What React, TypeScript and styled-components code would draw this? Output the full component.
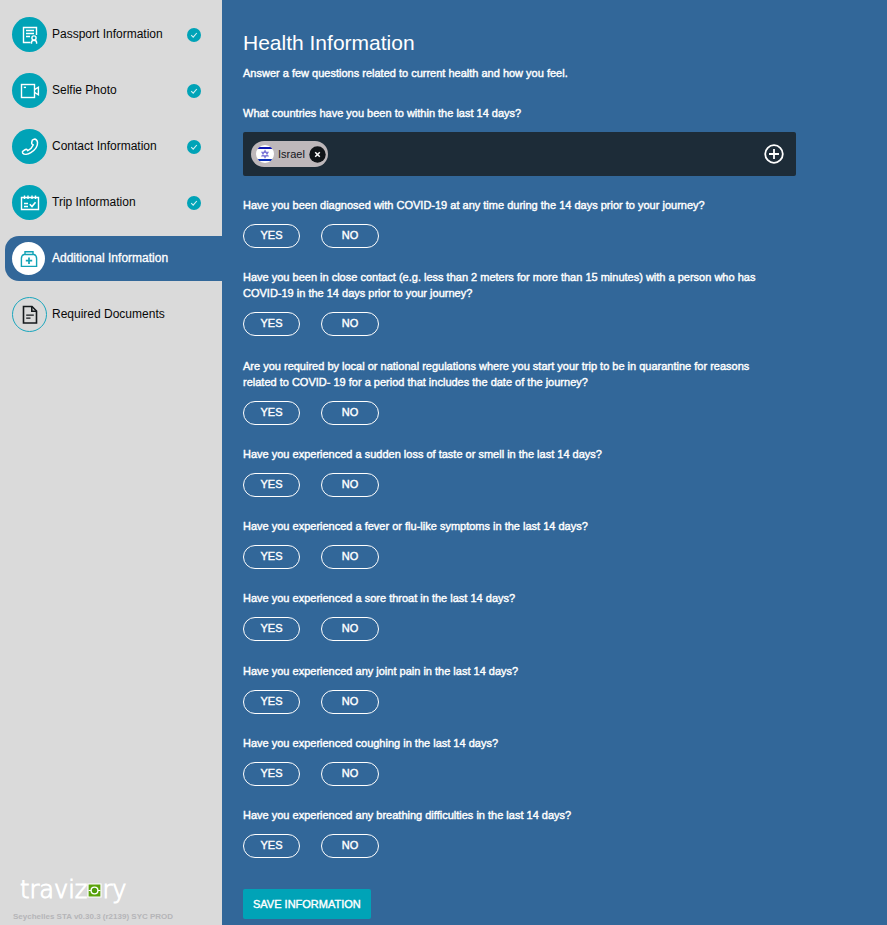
import React, { useState } from 'react';
import styled, { createGlobalStyle } from 'styled-components';

const GlobalStyle = createGlobalStyle`
  *, *::before, *::after { box-sizing: border-box; }
  body {
    margin: 0;
    background: #326799;
    font-family: "Liberation Sans", Arial, sans-serif;
  }
  button { font-family: inherit; cursor: pointer; }
`;

const Page = styled.div`
  display: flex;
  min-height: 100vh;
`;

const Sidebar = styled.aside`
  flex: 0 0 222px;
  display: flex;
  flex-direction: column;
  justify-content: space-between;
  padding: 12px 0 0 5px;
  background: #dadada;
`;

const Steps = styled.nav`
  display: flex;
  flex-direction: column;
  gap: 11px;
`;

const Step = styled.a<{ $active?: boolean }>`
  display: flex;
  align-items: center;
  height: 45px;
  padding: 0 21px 0 7px;
  border-radius: 14px 0 0 14px;
  color: ${(p) => (p.$active ? '#ffffff' : '#080808')};
  background: ${(p) => (p.$active ? '#326799' : 'transparent')};
  -webkit-text-stroke: ${(p) => (p.$active ? '0.3px' : '0')};
  font-size: 12px;
  line-height: 16px;
  text-decoration: none;
`;

type Tone = 'done' | 'active' | 'todo';

const StepIcon = styled.span<{ $tone: Tone }>`
  display: flex;
  align-items: center;
  justify-content: center;
  flex: none;
  width: ${(p) => (p.$tone === 'active' ? 33 : 35)}px;
  height: ${(p) => (p.$tone === 'active' ? 33 : 35)}px;
  margin-right: ${(p) => (p.$tone === 'active' ? 7 : 5)}px;
  border-radius: 50%;
  border: ${(p) => (p.$tone === 'todo' ? '1px solid #1aa6bd' : 'none')};
  background: ${(p) =>
    p.$tone === 'done' ? '#00a3b7' : p.$tone === 'active' ? '#ffffff' : 'transparent'};
  color: ${(p) =>
    p.$tone === 'done' ? '#ffffff' : p.$tone === 'active' ? '#12a3b6' : '#15191c'};
`;

const StepLabel = styled.span`
  flex: 1;
  padding-bottom: 2px;
`;

const Brand = styled.footer`
  padding: 0 8px;
`;

const Logo = styled.div`
  display: flex;
  align-items: center;
  height: 30px;
  padding-left: 7px;
  color: #ffffff;
  font-family: "DejaVu Sans", sans-serif;
  font-weight: 200;
  font-size: 24px;
  line-height: 30px;
  -webkit-text-stroke: 1px #ffffff;
`;

const Version = styled.p`
  margin: 4px 0 0;
  color: #b5b5b8;
  font-size: 8px;
  font-weight: 700;
  line-height: 16px;
`;

const Main = styled.main`
  flex: 1;
  display: flex;
  flex-direction: column;
  align-items: flex-start;
  min-width: 0;
  padding: 30px 91px 6px 21px;
  background: #326799;
  color: #ffffff;
`;

const Title = styled.h1`
  margin: 0;
  font-size: 21px;
  font-weight: 400;
  line-height: 26px;
`;

const Question = styled.p`
  margin: 0;
  padding-right: 20px;
  font-size: 11px;
  line-height: 16px;
  -webkit-text-stroke: 0.4px #ffffff;
`;

const Intro = styled(Question)`
  margin: 9px 0 24px;
`;

const CountryField = styled.div`
  display: flex;
  align-items: center;
  justify-content: space-between;
  width: 100%;
  height: 44px;
  margin: 11px 0 21px;
  padding: 0 12px 0 8px;
  border-radius: 2px;
  background: #1d2c38;
`;

const Chip = styled.span`
  display: flex;
  align-items: center;
  gap: 4px;
  height: 26px;
  padding: 0 2px 0 5px;
  border-radius: 13px;
  background: #bdb7ba;
  color: #14161c;
  font-size: 11px;
  line-height: 16px;
`;

const IconButton = styled.button`
  display: flex;
  padding: 0;
  border: 0;
  background: none;
  color: #ffffff;
`;

const QuestionList = styled.div`
  flex: 1;
  display: flex;
  flex-direction: column;
  justify-content: space-between;
  gap: 20px;
`;

const Answers = styled.div`
  display: flex;
  gap: 21px;
  margin-top: 11px;
`;

const AnswerButton = styled.button<{ $wide?: boolean }>`
  width: ${(p) => (p.$wide ? 58 : 57)}px;
  height: 24px;
  padding: 0 0 2px;
  border: 1px solid #ffffff;
  border-radius: 12px;
  background: transparent;
  color: #ffffff;
  font-size: 11px;
  line-height: 16px;
  -webkit-text-stroke: 0.4px;

  &[aria-pressed='true'] {
    background: #ffffff;
    color: #326799;
  }
`;

const SaveButton = styled.button`
  height: 30px;
  margin-top: 31px;
  padding: 0 10px;
  border: 0;
  border-radius: 2px;
  background: #00a3b7;
  color: #ffffff;
  font-size: 11px;
  line-height: 16px;
  -webkit-text-stroke: 0.4px;
`;

const PassportIcon = () => (
  <svg width="20" height="20" viewBox="0 0 20 20" fill="none" stroke="currentColor" strokeWidth="1.4" aria-hidden="true">
    <path d="M10.5 17.5H3.5V2.5H16.5V10" />
    <path d="M6 5.5H14M6 8.5H14M6 11.5H10" />
    <circle cx="14" cy="13" r="2.1" />
    <path d="M11.5 18.8V17.5C11.5 16 12.6 15.3 14 15.3S16.6 16 16.6 17.5V18.8" />
  </svg>
);

const CameraIcon = () => (
  <svg width="20" height="20" viewBox="0 0 20 20" fill="none" stroke="currentColor" strokeWidth="1.4" aria-hidden="true">
    <rect x="1.5" y="3.5" width="13" height="13" />
    <path d="M3.8 6.4H6" />
    <path d="M14.5 8.6L18.4 6.2V13.8L14.5 11.4" />
  </svg>
);

const PhoneIcon = () => (
  <svg width="20" height="20" viewBox="0 0 20 20" fill="none" stroke="currentColor" strokeWidth="1.5" strokeLinejoin="round" aria-hidden="true">
    <path d="M12.3 3.2L14.3 2.2C15.6 1.8 17.3 3.3 17.5 5.4C17.8 9 14.7 13.2 10.8 15.7C7.8 17.6 4.2 18 2.8 16.2C2.1 15.2 2.4 14.4 3.2 13.8L5.5 12.5C6.3 12.1 6.9 12.4 7.3 13L7.8 13.7C10.3 12.4 12.3 10.4 13.3 7.8L12.4 7.3C11.8 6.9 11.6 6.3 11.7 5.5Z" />
  </svg>
);

const CalendarIcon = () => (
  <svg width="20" height="20" viewBox="0 0 20 20" fill="none" stroke="currentColor" strokeWidth="1.4" aria-hidden="true">
    <path d="M1.5 4.5H18.5V16.5H1.5Z" />
    <path d="M4.5 2.5V6M8 2.5V6M12 2.5V6M15.5 2.5V6" />
    <path d="M4 10.5H8M4 13.5H8" />
    <path d="M9.8 11.3L12 13.6L15.5 9.3" strokeWidth="1.6" />
  </svg>
);

const MedicalIcon = () => (
  <svg width="20" height="20" viewBox="0 0 20 20" fill="none" stroke="currentColor" strokeWidth="1.4" aria-hidden="true">
    <path d="M6 5.3V2.8H14V5.3" />
    <path d="M5 5.5H15C16.8 6 17.6 7.6 17.6 9.5V17.4H2.4V9.5C2.4 7.6 3.2 6 5 5.5Z" />
    <path d="M10 8.5V15M6.8 11.7H13.2" strokeWidth="1.7" />
  </svg>
);

const DocumentIcon = () => (
  <svg width="20" height="20" viewBox="0 0 20 20" fill="none" stroke="currentColor" strokeWidth="1.6" aria-hidden="true">
    <path d="M3.5 1.5H12L16.5 6V18H3.5Z" />
    <path d="M11.8 1.7V6.2H16.5" />
    <path d="M6.2 10.2H13.8M6.2 13.2H10.5" strokeWidth="1.2" />
  </svg>
);

const DoneBadge = () => (
  <svg width="14" height="14" viewBox="0 0 14 14" role="img" aria-label="Completed">
    <circle cx="7" cy="7" r="7" fill="#00a3b7" />
    <path d="M4.2 7.2L6.2 9.1L9.8 5" fill="none" stroke="#d5f0f3" strokeWidth="1.1" />
  </svg>
);

const LogoMark = () => (
  <svg width="15" height="15" viewBox="0 0 15 15" aria-hidden="true">
    <path d="M1 1H14V14H1Z" fill="#5ba30b" stroke="#ffffff" strokeWidth="1.2" />
    <circle cx="7.5" cy="7.5" r="3.4" fill="#4f9d0c" stroke="#ffffff" strokeWidth="1.4" />
    <path d="M1.6 7.5H4M11 7.5H13.4" stroke="#ffffff" strokeWidth="1.2" />
  </svg>
);

const IsraelFlag = () => (
  <svg width="18" height="18" viewBox="0 0 18 18" aria-hidden="true">
    <defs>
      <clipPath id="flag-round"><circle cx="9" cy="9" r="9" /></clipPath>
    </defs>
    <g clipPath="url(#flag-round)">
      <rect width="18" height="18" fill="#ffffff" />
      <rect y="2" width="18" height="2" fill="#0b13b0" />
      <rect y="14" width="18" height="2" fill="#0b2fb8" />
      <path d="M9 5.6L12 10.8H6ZM9 12.5L6 7.3H12Z" fill="none" stroke="#7f78d8" strokeWidth="1.2" />
    </g>
  </svg>
);

const RemoveIcon = () => (
  <svg width="17" height="17" viewBox="0 0 17 17" aria-hidden="true">
    <circle cx="8.5" cy="8.5" r="8.2" fill="#101418" />
    <path d="M6.2 6.2L10.8 10.8M10.8 6.2L6.2 10.8" stroke="#ffffff" strokeWidth="1.5" />
  </svg>
);

const AddIcon = () => (
  <svg width="20" height="20" viewBox="0 0 20 20" fill="none" stroke="currentColor" strokeWidth="1.8" aria-hidden="true">
    <circle cx="10" cy="10" r="8.8" />
    <path d="M10 5V15M5 10H15" />
  </svg>
);

const steps: { label: string; tone: Tone; Icon: React.FC }[] = [
  { label: 'Passport Information', tone: 'done', Icon: PassportIcon },
  { label: 'Selfie Photo', tone: 'done', Icon: CameraIcon },
  { label: 'Contact Information', tone: 'done', Icon: PhoneIcon },
  { label: 'Trip Information', tone: 'done', Icon: CalendarIcon },
  { label: 'Additional Information', tone: 'active', Icon: MedicalIcon },
  { label: 'Required Documents', tone: 'todo', Icon: DocumentIcon },
];

const questions = [
  'Have you been diagnosed with COVID-19 at any time during the 14 days prior to your journey?',
  'Have you been in close contact (e.g. less than 2 meters for more than 15 minutes) with a person who has COVID-19 in the 14 days prior to your journey?',
  'Are you required by local or national regulations where you start your trip to be in quarantine for reasons related to COVID- 19 for a period that includes the date of the journey?',
  'Have you experienced a sudden loss of taste or smell in the last 14 days?',
  'Have you experienced a fever or flu-like symptoms in the last 14 days?',
  'Have you experienced a sore throat in the last 14 days?',
  'Have you experienced any joint pain in the last 14 days?',
  'Have you experienced coughing in the last 14 days?',
  'Have you experienced any breathing difficulties in the last 14 days?',
];

export default function App() {
  const [answers, setAnswers] = useState<Record<number, string>>({});
  const [countries, setCountries] = useState(['Israel']);

  return (
    <>
      <GlobalStyle />
      <Page>
        <Sidebar>
          <Steps aria-label="Application steps">
            {steps.map(({ label, tone, Icon }) => (
              <Step
                key={label}
                href="#"
                $active={tone === 'active'}
                aria-current={tone === 'active' ? 'step' : undefined}
              >
                <StepIcon $tone={tone}><Icon /></StepIcon>
                <StepLabel>{label}</StepLabel>
                {tone === 'done' && <DoneBadge />}
              </Step>
            ))}
          </Steps>
          <Brand>
            <Logo><span>traviz</span><LogoMark /><span>ry</span></Logo>
            <Version>Seychelles STA v0.30.3 (r2139) SYC PROD</Version>
          </Brand>
        </Sidebar>
        <Main>
          <Title>Health Information</Title>
          <Intro>Answer a few questions related to current health and how you feel.</Intro>
          <Question id="countries">What countries have you been to within the last 14 days?</Question>
          <CountryField role="group" aria-labelledby="countries">
            <div>
              {countries.map((country) => (
                <Chip key={country}>
                  <IsraelFlag />
                  {country}
                  <IconButton
                    type="button"
                    aria-label={`Remove ${country}`}
                    onClick={() => setCountries(countries.filter((c) => c !== country))}
                  >
                    <RemoveIcon />
                  </IconButton>
                </Chip>
              ))}
            </div>
            <IconButton type="button" aria-label="Add country"><AddIcon /></IconButton>
          </CountryField>
          <QuestionList>
            {questions.map((text, i) => (
              <div key={text} role="group" aria-labelledby={`question-${i}`}>
                <Question id={`question-${i}`}>{text}</Question>
                <Answers>
                  {['YES', 'NO'].map((answer) => (
                    <AnswerButton
                      key={answer}
                      type="button"
                      $wide={answer === 'NO'}
                      aria-pressed={answers[i] === answer}
                      onClick={() => setAnswers({ ...answers, [i]: answer })}
                    >
                      {answer}
                    </AnswerButton>
                  ))}
                </Answers>
              </div>
            ))}
          </QuestionList>
          <SaveButton type="button">SAVE INFORMATION</SaveButton>
        </Main>
      </Page>
    </>
  );
}
